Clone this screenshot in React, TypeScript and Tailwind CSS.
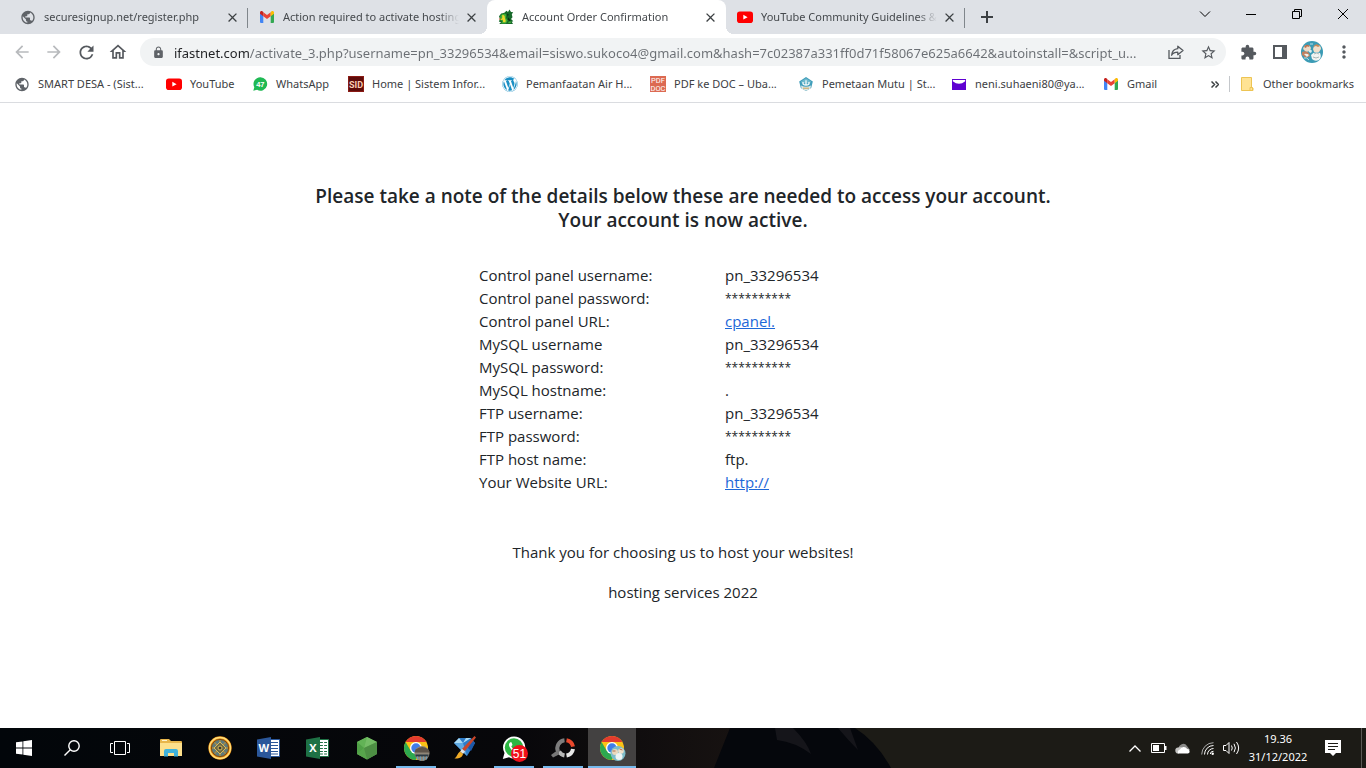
import React from "react";
import type { ReactNode } from "react";
import {
  MdArrowBack,
  MdArrowForward,
  MdClose,
  MdExtension,
  MdLock,
  MdMoreVert,
  MdOutlineHome,
  MdPublic,
  MdRefresh,
  MdStarBorder,
} from "react-icons/md";
import { FaWordpress } from "react-icons/fa";

/* ---------- small brand icons ---------- */

function GmailIcon() {
  return (
    <svg viewBox="0 0 16 16" className="size-4" aria-hidden="true">
      <path d="M1 4.2 4.3 6.6V14H2a1 1 0 0 1-1-1z" fill="#4285f4" />
      <path d="M15 4.2 11.7 6.6V14H14a1 1 0 0 0 1-1z" fill="#34a853" />
      <path d="M4.3 3.2 8 6l3.7-2.8v4L8 10 4.3 7.2z" fill="#ea4335" />
      <path d="M1 4.4V3.6C1 2.1 2.6 1.6 3.6 2.5l.7.6v4.1L1 4.8z" fill="#c5221f" />
      <path d="M15 4.4V3.6c0-1.500-1.600-2-2.600-1.100l-.7.6v4.1L15 4.800z" fill="#fbbc04" />
    </svg>
  );
}

function YouTubeIcon() {
  return (
    <svg viewBox="0 0 16 16" className="size-4" aria-hidden="true">
      <rect x="0" y="2.500" width="16" height="11.500" rx="2.800" fill="#f00" />
      <path d="M6.300 5.800 10.600 8.200 6.300 10.600z" fill="#fff" />
    </svg>
  );
}

function DragonIcon() {
  return (
    <svg viewBox="0 0 16 16" className="size-4" aria-hidden="true">
      <path d="M6 4 8.500 1.800 10 3l1.500-2.500L13 3l2.200.3-1.400 1.900.7 3L13 10l2.300 2.200-1.600.6 1.300 2.200H1.200L3 13.200.8 12.500 2 10.200 1 7.200 3.200 4.500z" fill="#17692a" />
      <path d="M2.500 6.500 5.500 4l2.800 1.400L8 9l1.700 2.600L8 14.500H3L4.600 12l-2.800-1z" fill="#3fae35" />
      <path d="M4.200 6.200C6 5.600 7 7 6.800 8.600c0 1.600 1.600 2.600.6 4.700H5.200l-.4-2.600-2.600.3 2-2z" fill="#ecd92c" />
      <path d="m9 4.600 1.800.8L9.600 7.800zM10.500 8.200l2 3.300-1.200.8-1.500-2zM5.300 3.800l1.200.6-.8.600z" fill="#0a3514" />
      <path d="m1 9.600 2.200-.2-1.400 1.600z" fill="#d8442b" />
      <path d="M11 12.500h2.500l-.8 1.500H10z" fill="#3fae35" />
    </svg>
  );
}

function WhatsAppUnreadIcon() {
  return (
    <svg viewBox="0 0 16 16" className="size-4" aria-hidden="true">
      <path d="M8.300 1.300a6.700 6.700 0 1 1-3.200 12.500L1.300 14.700l1-3.500A6.700 6.700 0 0 1 8.300 1.300z" fill="#1fb954" />
      <text x="8.300" y="10.700" textAnchor="middle" fontSize="7.500" fontWeight="700" fontFamily="Liberation Sans, Arial, sans-serif" fill="#fff">
        47
      </text>
    </svg>
  );
}

function SidIcon() {
  return (
    <svg viewBox="0 0 16 16" className="size-4" aria-hidden="true">
      <rect width="16" height="16" fill="#5e0c0a" />
      <rect x=".5" y=".5" width="15" height="15" fill="none" stroke="#8a1a14" />
      <text x="8" y="11.500" textAnchor="middle" fontSize="9" fontWeight="700" fontFamily="Roboto, sans-serif" fill="#f9cdb4">
        SID
      </text>
    </svg>
  );
}

function PdfDocIcon() {
  return (
    <svg viewBox="0 0 16 16" className="size-4" aria-hidden="true">
      <rect width="16" height="16" fill="#dc6a52" />
      <g fontSize="7.500" fontFamily="Roboto, sans-serif" fill="#fff" textAnchor="middle">
        <text x="8" y="7">PDF</text>
        <text x="8" y="15">DOC</text>
      </g>
    </svg>
  );
}

function SchoolIcon() {
  return (
    <svg viewBox="0 0 16 16" className="size-4" aria-hidden="true">
      <path d="M8 1 14.800 5.500 13.200 12 8 15 2.800 12 1.200 5.500z" fill="#3f9dba" />
      <path d="M3 5.500 8 2.200l5 3.300-1 2H4z" fill="#6fb9cd" />
      <path d="M3 9.500q5 2.500 10 0l-.6 3L8 14.800 3.600 12.500z" fill="#dfe6e2" />
      <path d="M8 4.200v5M5 6v1.500q0 1.500 3 1.500t3-1.500V6" stroke="#f4fafb" strokeWidth="1.300" fill="none" />
      <path d="M5 12.200h6" stroke="#c9a55a" />
    </svg>
  );
}

function YahooMailIcon() {
  return (
    <svg viewBox="0 0 16 16" className="size-4" aria-hidden="true">
      <rect x="1" y="3" width="14" height="11" fill="#5f01d1" />
      <path d="M1.800 4h12.400v1.200Q8 10.500 1.800 5.200z" fill="#fff" />
    </svg>
  );
}

function FolderIcon() {
  return (
    <svg viewBox="0 0 16 16" className="size-4" aria-hidden="true">
      <path d="M2.500 1.500h10v10.500h1.500v2.500h-11.500z" fill="#ffe394" stroke="#edc453" />
      <path d="M11 11.500h2.500v3H11z" fill="#ffe394" stroke="#edc453" />
    </svg>
  );
}

/* ---------- browser chrome ---------- */

type Tab = { title: string; icon: ReactNode; active?: boolean; divider?: boolean };

const globe = <MdPublic className="size-[17px] text-[#5f6368]" />;

const tabs: Tab[] = [
  { title: "securesignup.net/register.php", icon: globe, divider: true },
  { title: "Action required to activate hosting", icon: <GmailIcon /> },
  { title: "Account Order Confirmation", icon: <DragonIcon />, active: true },
  { title: "YouTube Community Guidelines &", icon: <YouTubeIcon />, divider: true },
];

function TabItem({ tab }: { tab: Tab }) {
  return (
    <div
      className={
        "relative flex h-full min-w-0 flex-[0_1_239px] items-center pl-[11px] pr-2 " +
        (tab.active ? "rounded-t-lg bg-white" : "")
      }
    >
      {tab.active && (
        <>
          <span className="absolute -left-2 bottom-0 size-2 bg-[radial-gradient(circle_at_0_0,#dee1e6_8px,#fff_8px)]" />
          <span className="absolute -right-2 bottom-0 size-2 bg-[radial-gradient(circle_at_100%_0,#dee1e6_8px,#fff_8px)]" />
        </>
      )}
      <button role="tab" aria-selected={!!tab.active} className="flex min-w-0 flex-1 items-center gap-2">
        <span className="flex size-4 shrink-0 items-center justify-center">{tab.icon}</span>
        <span className="flex-1 overflow-hidden whitespace-nowrap mask-[linear-gradient(to_right,#000_calc(100%-20px),transparent)] text-left text-[11px] text-[#45494d]">
          {tab.title}
        </span>
      </button>
      <button aria-label={"Close " + tab.title} className="ml-1 flex size-4 shrink-0 items-center justify-center text-[#3c4043]">
        <MdClose className="size-[15px]" />
      </button>
      {tab.divider && <span className="absolute right-0 top-2 h-5 w-px bg-[#80868b]" />}
    </div>
  );
}

function WindowButton({ label, children }: { label: string; children: ReactNode }) {
  return (
    <button aria-label={label} className="flex h-7 w-[46px] items-center justify-center">
      <svg viewBox="0 0 10 10" className="size-[10px] overflow-visible" fill="none" stroke="#000" aria-hidden="true">
        {children}
      </svg>
    </button>
  );
}

function TabStrip() {
  return (
    <div className="flex h-[34px] bg-[#dee1e6] pl-[9px]">
      <div role="tablist" className="flex min-w-0 flex-[0_1_956px]">
        {tabs.map((tab) => (
          <TabItem key={tab.title} tab={tab} />
        ))}
      </div>
      <button aria-label="New tab" className="ml-2 flex w-7 items-center justify-center">
        <svg viewBox="0 0 12 12" className="size-3" aria-hidden="true">
          <path d="M6 0v12M0 6h12" stroke="#3c4043" strokeWidth="2" />
        </svg>
      </button>
      <div className="ml-auto flex">
        <WindowButton label="Search tabs">
          <path d="M0 2.500 5 7.500 10 2.500" />
        </WindowButton>
        <WindowButton label="Minimize">
          <path d="M0 5.500h10" />
        </WindowButton>
        <WindowButton label="Restore">
          <path d="M.5 2.500h7v7h-7zM2.500 2.500v-2h7v7h-2" />
        </WindowButton>
        <WindowButton label="Close">
          <path d="m0 0 10 10M10 0 0 10" />
        </WindowButton>
      </div>
    </div>
  );
}

function ToolButton({ label, muted, children }: { label: string; muted?: boolean; children: ReactNode }) {
  return (
    <button
      aria-label={label}
      disabled={muted}
      className={"flex size-8 shrink-0 items-center justify-center " + (muted ? "text-[#b8babd]" : "text-[#55595e]")}
    >
      {children}
    </button>
  );
}

const address =
  "ifastnet.com/activate_3.php?username=pn_33296534&email=siswo.sukoco4@gmail.com&hash=7c02387a331ff0d71f58067e625a6642&autoinstall=&script_u...";

function Toolbar() {
  return (
    <div className="flex h-9 items-center px-[6px]">
      <ToolButton label="Back" muted>
        <MdArrowBack className="size-5" />
      </ToolButton>
      <ToolButton label="Forward" muted>
        <MdArrowForward className="size-5" />
      </ToolButton>
      <ToolButton label="Reload">
        <MdRefresh className="size-[21px]" />
      </ToolButton>
      <ToolButton label="Home">
        <MdOutlineHome className="size-5" />
      </ToolButton>
      <div className="mx-[6px] flex h-7 min-w-0 flex-1 items-center rounded-full bg-[#f1f3f4] pl-3 pr-[2px]">
        <MdLock className="size-[13px] shrink-0 text-[#5f6368]" />
        <input
          aria-label="Address"
          defaultValue={address}
          className="ml-[9px] h-7 min-w-0 flex-1 bg-[linear-gradient(to_right,#202124_75px,#6b6f74_75px)] bg-clip-text pt-px text-[13px] text-transparent outline-none"
        />
        <ToolButton label="Share this page">
          <svg viewBox="0 0 16 16" className="size-4" fill="none" stroke="currentColor" strokeWidth="1.300" aria-hidden="true">
            <path d="M1 6v8.300h11V11" />
            <path d="M9.800 2.200 15 6.500l-5.200 4.200V8.200C7 8.200 5 9 3.600 11.200 4 7.500 6.200 5 9.800 4.700z" strokeLinejoin="round" />
          </svg>
        </ToolButton>
        <ToolButton label="Bookmark this tab">
          <MdStarBorder className="size-[17px]" />
        </ToolButton>
      </div>
      <ToolButton label="Extensions">
        <MdExtension className="size-[17px]" />
      </ToolButton>
      <ToolButton label="Side panel">
        <svg viewBox="0 0 14 14" className="size-[14px]" aria-hidden="true">
          <path d="M1 1h12v12H1z" fill="none" stroke="currentColor" strokeWidth="2" />
          <path d="M9 1h4v12H9z" fill="currentColor" />
        </svg>
      </ToolButton>
      <ToolButton label="Profile">
        <Avatar />
      </ToolButton>
      <ToolButton label="Menu">
        <MdMoreVert className="size-5" />
      </ToolButton>
    </div>
  );
}

function Avatar() {
  return (
    <svg viewBox="0 0 22 22" className="size-[22px] rounded-full" aria-hidden="true">
      <rect width="22" height="22" fill="#3b9bb5" />
      <path d="M2 8q1-4 4-4 3 0 4 3l-1 3-4 1z" fill="#ecd9c6" />
      <path d="M3 6q2-4 6-1l-2 1-1-1-1 2z" fill="#b96f4c" />
      <path d="M1 11q4-2 7 1l1 3-4 2-4-3z" fill="#c08060" />
      <path d="M3 13q3-1 5 1l-2 2z" fill="#eef2ee" />
      <path d="M12 8q1-4 4-4 4 0 4 4l-2 3h-5z" fill="#f1dfca" />
      <path d="M12 6q3-5 7-1l-2 1-2-1z" fill="#c98a5a" />
      <path d="M10 14q3-4 9-2 2 4-1 7-4 2-7-1z" fill="#f1f4f2" />
      <path d="M8 9q2-1 3 1l-1 2-2-1z" fill="#dcecee" />
      <path d="M13 13q3-2 5 0M12 16q3 2 6 0" stroke="#a9b8b5" fill="none" />
      <path d="M3 17q3-1 5 2M9 3h3" stroke="#bcdfe6" fill="none" />
    </svg>
  );
}

type Bookmark = { label: string; icon: ReactNode; width: string };

const bookmarks: Bookmark[] = [
  { label: "SMART DESA - (Sist...", icon: globe, width: "w-[152px]" },
  { label: "YouTube", icon: <YouTubeIcon />, width: "w-[86px]" },
  { label: "WhatsApp", icon: <WhatsAppUnreadIcon />, width: "w-24" },
  { label: "Home | Sistem Infor...", icon: <SidIcon />, width: "w-[154px]" },
  { label: "Pemanfaatan Air H...", icon: <FaWordpress className="size-4 text-[#1a8fc4]" />, width: "w-[148px]" },
  { label: "PDF ke DOC – Uba...", icon: <PdfDocIcon />, width: "w-[148px]" },
  { label: "Pemetaan Mutu | St...", icon: <SchoolIcon />, width: "w-[153px]" },
  { label: "neni.suhaeni80@ya...", icon: <YahooMailIcon />, width: "w-[152px]" },
  { label: "Gmail", icon: <GmailIcon />, width: "w-20" },
];

function BookmarksBar() {
  return (
    <nav aria-label="Bookmarks" className="flex h-[33px] items-center border-b border-[#dadce0] pb-1 pl-[14px] pr-3 text-[11px] text-[#3c4043]">
      <div className="flex min-w-0 flex-1 overflow-hidden">
        {bookmarks.map((b) => (
          <a key={b.label} href="#" className={"flex shrink-0 items-center gap-2 whitespace-nowrap " + b.width}>
            <span className="flex size-4 shrink-0 items-center justify-center">{b.icon}</span>
            {b.label}
          </a>
        ))}
      </div>
      <button aria-label="More bookmarks" className="flex w-7 justify-center">
        <svg viewBox="0 0 8 7" className="h-[7px] w-2" fill="none" stroke="#3c4043" strokeWidth="1.500" aria-hidden="true">
          <path d="m.5.5 3 3-3 3M4.500.5l3 3-3 3" />
        </svg>
      </button>
      <span className="h-4 w-px bg-[#c4c7cb]" />
      <a href="#" className="ml-[9px] flex items-center gap-2 whitespace-nowrap">
        <FolderIcon />
        Other bookmarks
      </a>
    </nav>
  );
}

/* ---------- page ---------- */

type Detail = { label: string; value: string; kind?: "link" | "secret" };

const details: Detail[] = [
  { label: "Control panel username:", value: "pn_33296534" },
  { label: "Control panel password:", value: "**********", kind: "secret" },
  { label: "Control panel URL:", value: "cpanel.", kind: "link" },
  { label: "MySQL username", value: "pn_33296534" },
  { label: "MySQL password:", value: "**********", kind: "secret" },
  { label: "MySQL hostname:", value: "." },
  { label: "FTP username:", value: "pn_33296534" },
  { label: "FTP password:", value: "**********", kind: "secret" },
  { label: "FTP host name:", value: "ftp." },
  { label: "Your Website URL:", value: "http://", kind: "link" },
];

function DetailValue({ detail }: { detail: Detail }) {
  if (detail.kind === "link") {
    return (
      <a href="#" className="text-[#1d68d8] underline">
        {detail.value}
      </a>
    );
  }
  if (detail.kind === "secret") {
    return <span className="block text-[12px]">{detail.value}</span>;
  }
  return <>{detail.value}</>;
}

function AccountPage() {
  return (
    <main className="flex flex-1 flex-col items-center bg-white pt-[81px] text-[15px] leading-6 text-[#212529]">
      <h1 className="text-center text-[19px] font-semibold leading-6">
        Please take a note of the details below these are needed to access your account.
        <br />
        Your account is now active.
      </h1>
      <table className="mt-8 w-[408px]">
        <tbody>
          {details.map((d) => (
            <tr key={d.label} className="leading-[23px]">
              <th scope="row" className="w-[246px] p-0 text-left font-normal">
                {d.label}
              </th>
              <td className="p-0">
                <DetailValue detail={d} />
              </td>
            </tr>
          ))}
        </tbody>
      </table>
      <p className="mt-[46px]">Thank you for choosing us to host your websites!</p>
      <p className="mt-4">hosting services 2022</p>
    </main>
  );
}

/* ---------- taskbar ---------- */

function ChromeIcon({ badge }: { badge: ReactNode }) {
  return (
    <svg viewBox="-1 -1 28 28" className="size-7 overflow-visible" aria-hidden="true">
      <circle cx="13" cy="13" r="12" fill="#fbc116" />
      <path d="M2.600 7A12 12 0 0 1 23.400 7H13z" fill="#e33b2e" />
      <path d="M2.600 7A12 12 0 0 0 12.500 25l5.300-9.200L13 13 7.800 16z" fill="#2da94f" />
      <circle cx="13" cy="13" r="6" fill="#fff" />
      <circle cx="13" cy="13" r="4.700" fill="#3f7de8" />
      {badge}
    </svg>
  );
}

function StartIcon() {
  return (
    <svg viewBox="0 0 16 16" className="size-4" fill="#fff" aria-hidden="true">
      <path d="M0 2.300 6.500 1.400v6.200H0zM7.300 1.300 16 0v7.600H7.300zM0 8.400h6.500v6.200L0 13.700zM7.300 8.400H16V16l-8.700-1.300z" />
    </svg>
  );
}

function SearchIcon() {
  return (
    <svg viewBox="0 0 16 16" className="size-4" fill="none" stroke="#fff" strokeWidth="1.400" aria-hidden="true">
      <circle cx="10" cy="6" r="5.200" />
      <path d="M6.300 9.700.5 15.500" />
    </svg>
  );
}

function TaskViewIcon() {
  return (
    <svg viewBox="0 0 20 14" className="h-[14px] w-5" fill="none" stroke="#fff" aria-hidden="true">
      <path d="M4.500.5h11v13h-11zM3 2.500H.5v9H3M17 2.500h2.500v9H17" />
    </svg>
  );
}

function ExplorerIcon() {
  return (
    <svg viewBox="0 0 22 20" className="h-5 w-[22px]" aria-hidden="true">
      <path d="M0 2a1 1 0 0 1 1-1h8l2 2h10a1 1 0 0 1 1 1v13.500H0z" fill="#e8b64c" />
      <path d="M0 5h22v13H0z" fill="#fde08c" />
      <path d="M2 2h5v1H2z" fill="#fff4cf" />
      <path d="M4 18.500V13a2 2 0 0 1 2-2h10a2 2 0 0 1 2 2v5.500h-4V15H8v3.500z" fill="#3fb2dc" />
    </svg>
  );
}

function CompassIcon() {
  return (
    <svg viewBox="0 0 24 24" className="size-6" aria-hidden="true">
      <circle cx="12" cy="12" r="11.700" fill="#e88a12" />
      <circle cx="12" cy="12" r="10.500" fill="none" stroke="#ffe07a" strokeWidth="1.300" />
      <circle cx="12" cy="12" r="8.600" fill="#5d7a7c" stroke="#7c4a10" />
      <path d="M12 4v16M4 12h16M6.500 6.500l11 11M17.500 6.500l-11 11" stroke="#a78c46" strokeWidth="1.400" />
      <path d="m12 6 6 6-6 6-6-6z" fill="#6e6a45" stroke="#d6b95e" />
      <circle cx="12" cy="12" r="2" fill="#3d382d" stroke="#d9bb5b" />
    </svg>
  );
}

function OfficeIcon({ letter, color, excel }: { letter: string; color: string; excel?: boolean }) {
  return (
    <svg viewBox="0 0 24 24" className="size-6" aria-hidden="true">
      <path d="M12 3.500h10.500v17H12z" fill="#fff" stroke={color} />
      <path d="M14 6.500h7M14 9.500h7M14 12.500h7M14 15.500h7M14 18h7" stroke={color} strokeWidth="1.200" />
      {excel && <path d="M17.500 4v16" stroke="#fff" strokeWidth="1.200" />}
      <path d="M0 3.500 14 1v22L0 20.500z" fill={color} />
      <text x="6.800" y="16" textAnchor="middle" fontSize="11" fontWeight="700" fontFamily="Open Sans, sans-serif" fill="#fff">
        {letter}
      </text>
    </svg>
  );
}

function HexIcon() {
  return (
    <svg viewBox="0 0 22 24" className="h-6 w-[22px]" aria-hidden="true">
      <path d="m11 1 10 5v12l-10 5.500L1 18V6z" fill="#5ea84f" />
      <path d="M11 1 1 6l7 6z" fill="#62b356" />
      <path d="m11 1 10 5-13 6z" fill="#74bd66" />
      <path d="M1 6v12l7-6z" fill="#4fa046" />
      <path d="m8 12 3 11.500L1 18z" fill="#57a44c" />
      <path d="m21 6-13 6 3 11.500L21 18z" fill="#4d8f44" />
    </svg>
  );
}

function PaintIcon() {
  return (
    <svg viewBox="0 0 24 24" className="size-6" aria-hidden="true">
      <path d="m1 7 5-5h12l4 5-8 13z" fill="#2e7cc9" />
      <path d="m1 7 5-5 4 5zM10 7l3-5h5z" fill="#a9daf5" />
      <path d="m1 7h9l4 13z" fill="#5fa9e2" />
      <path d="m18 3 4 4-4 8-3-3z" fill="#1c58a8" />
      <path d="M21.500 0 23 1.500 12 15l-3-2z" fill="#c9462a" />
      <path d="m9 13 3 2.500-2 2.500-3-2.500z" fill="#e6e6e6" />
      <path d="M7 15.500 10 18c-1 4-5 5-8.500 4.500C4 21 4.500 17 7 15.500z" fill="#f0ab26" />
    </svg>
  );
}

function WhatsAppIcon() {
  return (
    <span className="relative size-6">
      <svg viewBox="0 0 24 24" className="size-6" aria-hidden="true">
        <path d="M12 .5a11 11 0 1 1-5 20.700L.8 23l1.700-6A11 11 0 0 1 12 .5z" fill="#fff" />
        <circle cx="12" cy="11.500" r="9.200" fill="#2cb742" />
        <path d="M8.300 6.300c-1.600 1-1.800 3-.3 5.500 1.800 3 4.300 5 6.800 5 2 0 3-1.300 2.800-2.800l-2.800-1.400-1.500 1.700c-2-1-3.200-2.300-4-4l1.200-1.400-1-2.600z" fill="#fff" />
      </svg>
      <span className="absolute left-[9px] top-[9px] flex size-[17px] items-center justify-center rounded-full bg-[#f0101a] font-['Liberation_Sans',Arial,sans-serif] text-[12px] leading-none text-white">
        51
      </span>
    </span>
  );
}

function CCleanerIcon() {
  return (
    <svg viewBox="0 0 24 20" className="h-5 w-6" fill="none" aria-hidden="true">
      <path d="M13.500 2.300A8 8 0 0 0 7 13.500" stroke="#7d7d7d" strokeWidth="4" />
      <path d="M15.500 2.200a8 8 0 0 1 6.500 6.500" stroke="#e9482c" strokeWidth="4" />
      <path d="M22 11a8 8 0 0 1-6.500 6.500" stroke="#e8e8e8" strokeWidth="4" />
      <path d="M13.500 17.500A8 8 0 0 1 8 13.500" stroke="#b7b7b7" strokeWidth="4" />
      <path d="m8 12-4 2-4 3 2 2.500 6-3z" fill="#777" />
    </svg>
  );
}

type App = { name: string; icon: ReactNode; open?: boolean; active?: boolean };

const apps: App[] = [
  { name: "File Explorer", icon: <ExplorerIcon /> },
  { name: "Compass", icon: <CompassIcon /> },
  { name: "Word", icon: <OfficeIcon letter="W" color="#2b579a" /> },
  { name: "Excel", icon: <OfficeIcon letter="X" color="#1e7145" excel /> },
  { name: "Hexagon", icon: <HexIcon /> },
  {
    name: "Chrome, first profile",
    open: true,
    icon: (
      <ChromeIcon
        badge={
          <g>
            <circle cx="19" cy="18.500" r="7.500" fill="#8f8678" />
            <path d="M11.500 17.500h15l-1-3q-6-5-13 0z" fill="#5d5349" />
            <path d="M12.500 19.500h13v2h-13z" fill="#2b3a45" />
            <path d="M14.500 21.500v3M17.500 21.500v4M20.500 21.500v4M23.500 21.500v3" stroke="#6b9cb5" />
          </g>
        }
      />
    ),
  },
  { name: "Paint tool", icon: <PaintIcon /> },
  { name: "WhatsApp", icon: <WhatsAppIcon />, open: true },
  { name: "Cleaner", icon: <CCleanerIcon />, open: true },
  {
    name: "Chrome, second profile",
    open: true,
    active: true,
    icon: (
      <ChromeIcon
        badge={
          <g>
            <circle cx="19" cy="18.500" r="7.500" fill="#7dbcc9" />
            <circle cx="16" cy="17" r="3" fill="#ead8bd" />
            <circle cx="22" cy="16" r="2.800" fill="#f0e1ca" />
            <circle cx="20" cy="21.500" r="3.500" fill="#eef5f4" />
            <path d="M13.500 16h3M20.500 14l3 1" stroke="#b0704f" />
          </g>
        }
      />
    ),
  },
];

function TaskButton({ app }: { app: App }) {
  return (
    <button
      aria-label={app.name}
      className={"relative flex h-full w-12 items-center justify-center " + (app.active ? "bg-[#434141]" : "")}
    >
      {app.icon}
      {app.open && (
        <span className={"absolute bottom-0 h-[2px] bg-[#76b9ed] " + (app.active ? "inset-x-0" : "inset-x-1")} />
      )}
    </button>
  );
}

function Tray() {
  return (
    <div className="relative ml-auto flex h-full items-center text-white">
      <button aria-label="Show hidden icons" className="flex w-6 justify-center">
        <svg viewBox="0 0 12 7" className="h-[7px] w-3" fill="none" stroke="#fff" strokeWidth="1.300" aria-hidden="true">
          <path d="m.5 6.500 5.500-5.500 5.500 5.500" />
        </svg>
      </button>
      <button aria-label="Battery" className="flex w-6 justify-center">
        <svg viewBox="0 0 16 10" className="h-[10px] w-4" aria-hidden="true">
          <path d="M.5.5h13v9H.5z" fill="none" stroke="#fff" />
          <path d="M2 2h6v6H2zM14 3h1.500v4H14z" fill="#fff" />
        </svg>
      </button>
      <button aria-label="Cloud storage" className="flex w-6 justify-center">
        <svg viewBox="0 0 16 11" className="h-[11px] w-4" aria-hidden="true">
          <path d="M4 7a4.500 4.500 0 0 1 8-4l3 4z" fill="#8b8b89" />
          <path d="M3.500 10.500a3 3 0 0 1-.4-6 4 4 0 0 1 5 1z" fill="#c4c4c2" />
          <path d="M3 10.500A3 3 0 0 1 5 6.500a4 4 0 0 1 7.200-.5 2.300 2.300 0 0 1 .8 4.500z" fill="#fff" />
        </svg>
      </button>
      <button aria-label="Network" className="flex w-6 justify-center">
        <svg viewBox="0 0 13 13" className="size-[13px]" fill="none" stroke="#fff" aria-hidden="true">
          <path d="M.7 12.500A11.800 11.800 0 0 1 12.500.7" stroke="#aaa" />
          <path d="M3.500 12.500a9 9 0 0 1 9-9M6.500 12.500a6 6 0 0 1 6-6M9.300 12a3 3 0 0 1 3.200-2.700" />
          <circle cx="11.700" cy="11.700" r="1.200" fill="#fff" stroke="none" />
        </svg>
      </button>
      <button aria-label="Volume" className="flex w-6 justify-center">
        <svg viewBox="0 0 17 14" className="h-[14px] w-[17px]" fill="none" stroke="#fff" aria-hidden="true">
          <path d="M.5 4.500H3l3-3v11l-3-3H.5z" />
          <path d="M8.500 4.500q1.500 2.500 0 5M11 2.800q2.800 4.200 0 8.400M13.500 1q4.300 6 0 12" />
        </svg>
      </button>
      <button aria-label="Clock" className="w-[70px] text-center font-['Noto_Sans',sans-serif] text-[11px] leading-[18px]">
        <span className="block">19.36</span>
        <span className="block">31/12/2022</span>
      </button>
      <button aria-label="Notifications" className="flex w-10 justify-center">
        <svg viewBox="0 0 16 16" className="size-4" aria-hidden="true">
          <path d="M0 0h16v13h-5l-3 3-3-3H0z" fill="#fff" />
          <path d="M3 3.500h10M3 6.500h10M3 9.500h7" stroke="#1c1b16" />
        </svg>
      </button>
      <span className="ml-2 mr-1 h-full w-px bg-[#5a5955]" />
    </div>
  );
}

function Taskbar() {
  return (
    <footer className="relative flex h-10 shrink-0 bg-[#1c1b16]">
      <svg viewBox="0 0 1366 40" preserveAspectRatio="none" className="absolute inset-0 size-full" aria-hidden="true">
        <defs>
          <linearGradient id="wall">
            <stop offset="0" stopColor="#02060a" />
            <stop offset="0.700" stopColor="#07070a" />
            <stop offset="1" stopColor="#171211" />
          </linearGradient>
        </defs>
        <path d="M0 0h735v40H0z" fill="url(#wall)" />
        <path d="M730 0h125q22 14 36 40H714z" fill="#05070c" />
        <path d="M775 0h18q14 14 18 26-16-12-34-14zM838 0h12l8 22q-10-10-20-22z" fill="#15151a" />
      </svg>
      <div className="relative flex">
        <button aria-label="Start" className="flex w-12 items-center justify-center">
          <StartIcon />
        </button>
        <button aria-label="Search" className="flex w-12 items-center justify-center">
          <SearchIcon />
        </button>
        <button aria-label="Task view" className="flex w-12 items-center justify-center">
          <TaskViewIcon />
        </button>
        <div className="ml-[3px] flex gap-px">
          {apps.map((app) => (
            <TaskButton key={app.name} app={app} />
          ))}
        </div>
      </div>
      <Tray />
    </footer>
  );
}

export default function App() {
  return (
    <div className="flex min-h-screen flex-col bg-white font-['Open_Sans','Noto_Sans',sans-serif]">
      <header className="font-['Noto_Sans',sans-serif]">
        <TabStrip />
        <Toolbar />
        <BookmarksBar />
      </header>
      <AccountPage />
      <Taskbar />
    </div>
  );
}
